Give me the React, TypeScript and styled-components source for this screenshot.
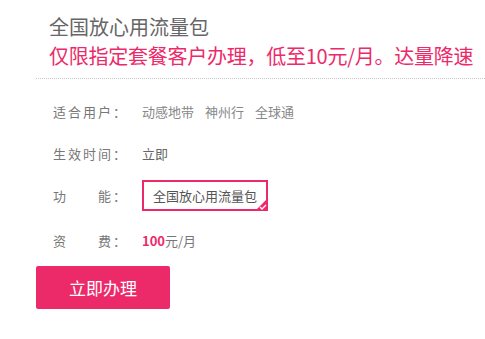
import * as React from 'react'
import styled, { createGlobalStyle } from 'styled-components'

const GlobalStyle = createGlobalStyle`
  body {
    margin: 0;
    background: #fff;
    font-family: "Microsoft YaHei", "Noto Sans CJK SC", sans-serif;
  }
`

const PINK = '#ec2a6a'

const Page = styled.div`
  padding-left: 36px;
  width: 449px;
`

const Header = styled.div`
  padding: 12px 0 8px 13px;
  border-bottom: 1px dotted #c8c8c8;
`

const Title = styled.div`
  font-size: 20px;
  line-height: 29px;
  color: #666;
`

const Slogan = styled.div`
  font-size: 20px;
  line-height: 29px;
  letter-spacing: -0.25px;
  color: ${PINK};
  white-space: nowrap;
`

const List = styled.div`
  display: flex;
  flex-direction: column;
  gap: 12px;
  padding: 17px 0 0 17px;
`

const Row = styled.div<{ $extra?: number }>`
  display: flex;
  align-items: center;
  min-height: 30px;
  margin-top: ${p => p.$extra || 0}px;
  font-size: 13px;
`

const Label = styled.div<{ $spread?: boolean }>`
  width: 89px;
  flex: none;
  color: #777;
  letter-spacing: 2px;
  display: flex;
  justify-content: ${p => (p.$spread ? 'space-between' : 'flex-start')};
  padding-right: ${p => (p.$spread ? 14 : 0)}px;
  box-sizing: border-box;
`

const Value = styled.div<{ $dark?: boolean }>`
  color: ${p => (p.$dark ? '#666' : '#888')};
  display: flex;
  gap: 11px;
`

const Price = styled.span`
  color: #777;
  b {
    color: ${PINK};
    font-weight: bold;
  }
`

const Chip = styled.div`
  position: relative;
  box-sizing: border-box;
  height: 31px;
  width: 126px;
  border: 2px solid ${PINK};
  display: flex;
  align-items: center;
  justify-content: center;
  color: #555;
  font-size: 13px;
`

const Corner = styled.svg`
  position: absolute;
  right: -2px;
  bottom: -2px;
`

const Button = styled.button`
  margin-top: 11px;
  width: 134px;
  height: 43px;
  border: none;
  border-radius: 2px;
  background: ${PINK};
  color: #fff;
  font-family: inherit;
  font-size: 17px;
  cursor: pointer;
`

export default function App() {
  return (
    <Page>
      <GlobalStyle />
      <Header>
        <Title>全国放心用流量包</Title>
        <Slogan>仅限指定套餐客户办理，低至10元/月。达量降速</Slogan>
      </Header>
      <List>
        <Row>
          <Label>适合用户：</Label>
          <Value>
            <span>动感地带</span>
            <span>神州行</span>
            <span>全球通</span>
          </Value>
        </Row>
        <Row>
          <Label>生效时间：</Label>
          <Value $dark>立即</Value>
        </Row>
        <Row>
          <Label $spread>
            <span>功</span>
            <span>能：</span>
          </Label>
          <Chip>
            全国放心用流量包
            <Corner width="13" height="13" viewBox="0 0 13 13">
              <polygon points="13,0 13,13 0,13" fill={PINK} />
              <polyline points="5,9 7,11 11,7" fill="none" stroke="#fff" strokeWidth="1.3" />
            </Corner>
          </Chip>
        </Row>
        <Row $extra={2}>
          <Label $spread>
            <span>资</span>
            <span>费：</span>
          </Label>
          <Price>
            <b>100</b>元/月
          </Price>
        </Row>
      </List>
      <Button>立即办理</Button>
    </Page>
  )
}
